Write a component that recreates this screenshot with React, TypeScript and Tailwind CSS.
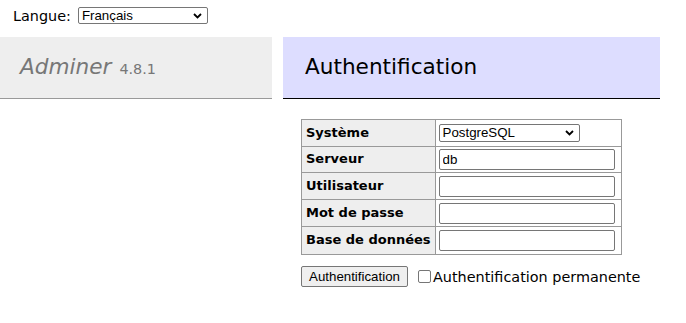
import React from 'react'

function Chevron() {
  return (
    <svg width="9" height="6" viewBox="0 0 9 6" className="pointer-events-none absolute right-[6px] top-1/2 -translate-y-1/2">
      <path d="M1 1l3.5 3.5L8 1" fill="none" stroke="#000" strokeWidth="1.8" />
    </svg>
  )
}

function Select({ value, options, className }: { value: string; options: string[]; className: string }) {
  return (
    <div className={`relative inline-block ${className}`}>
      <select
        defaultValue={value}
        className="block h-full w-full appearance-none rounded-[2px] border border-[#767676] bg-white pl-[3px] pr-5 font-['Liberation_Sans',Arial,sans-serif] text-[13.3px] leading-none text-black outline-none"
      >
        {options.map((o) => (
          <option key={o}>{o}</option>
        ))}
      </select>
      <Chevron />
    </div>
  )
}

function Field({ value = '', type = 'text' }: { value?: string; type?: string }) {
  return (
    <input
      type={type}
      defaultValue={value}
      className="block h-[21px] w-[176px] rounded-[2px] border border-[#767676] bg-white px-[3px] font-['Liberation_Sans',Arial,sans-serif] text-[13.3px] text-black outline-none"
    />
  )
}

const rows: { label: string; cell: React.ReactNode; h: string }[] = [
  { label: 'Système', cell: <Select value="PostgreSQL" options={['MySQL', 'SQLite', 'PostgreSQL', 'Oracle (beta)', 'MS SQL (beta)']} className="h-[18px] w-[141px]" />, h: 'h-[27px]' },
  { label: 'Serveur', cell: <Field value="db" />, h: 'h-[26px]' },
  { label: 'Utilisateur', cell: <Field />, h: 'h-[27px]' },
  { label: 'Mot de passe', cell: <Field type="password" />, h: 'h-[27px]' },
  { label: 'Base de données', cell: <Field />, h: 'h-[28px]' },
]

export default function App() {
  return (
    <div className="min-h-[323px] bg-white font-['DejaVu_Sans',Verdana,sans-serif] text-[14.4px] leading-[1.25] text-black">
      {/* language picker */}
      <div className="flex h-[37px] items-start gap-[7px] pl-[13px] pt-[7px]">
        <span className="text-[14.4px] leading-[18px]">Langue:</span>
        <Select value="Français" options={['English', 'Français', 'Deutsch', 'Español']} className="h-[17px] w-[130px]" />
      </div>

      <div className="flex items-start">
        {/* menu */}
        <div className="w-[272px]">
          <h1 className="flex h-[62px] items-center border-b border-[#999] bg-[#eee] pl-[20px] text-[21.6px] font-normal text-[#777]">
            <a className="italic">Adminer</a>
            <span className="ml-[8px] mt-[3px] text-[14.4px]">4.8.1</span>
          </h1>
        </div>

        {/* content */}
        <div className="ml-[11px] w-[377px]">
          <h2 className="flex h-[62px] items-center border-b border-black bg-[#ddf] pl-[22px] text-[21.6px] font-normal text-black">
            Authentification
          </h2>
          <form className="pl-[18px] pt-[20px]">
            <table className="border-collapse text-[13px]">
              <tbody>
                {rows.map((r) => (
                  <tr key={r.label} className={r.h}>
                    <th className="w-[133px] border border-[#999] bg-[#eee] px-[4px] text-left font-bold whitespace-nowrap">
                      {r.label}
                    </th>
                    <td className="w-[186px] border border-[#999] px-[3px]">{r.cell}</td>
                  </tr>
                ))}
              </tbody>
            </table>
            <div className="mt-[11px] flex items-center">
              <button
                type="button"
                className="h-[21px] w-[107px] rounded-[2px] border border-[#767676] bg-[#efefef] font-['Liberation_Sans',Arial,sans-serif] text-[13.3px] leading-none text-black"
              >
                Authentification
              </button>
              <label className="ml-[10px] flex items-center">
                <span className="mr-[2px] inline-block h-[13px] w-[13px] rounded-[2px] border border-[#767676] bg-white" />
                <span className="text-[14.4px]">Authentification permanente</span>
              </label>
            </div>
          </form>
        </div>
      </div>
    </div>
  )
}
